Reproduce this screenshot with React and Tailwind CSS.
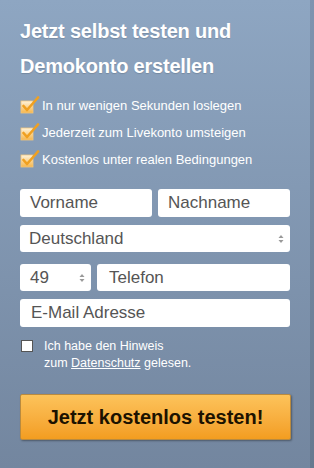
import React from "react";

function CheckIcon() {
  return (
    <svg width="20" height="18" viewBox="0 0 20 18" className="shrink-0">
      <defs>
        <linearGradient id="bx" x1="0" y1="0" x2="0" y2="1">
          <stop offset="0" stopColor="#fff4dc" />
          <stop offset="1" stopColor="#f5b54a" />
        </linearGradient>
      </defs>
      <rect x="1" y="5" width="12" height="12" fill="url(#bx)" stroke="#f2c57a" strokeWidth="0.8" />
      <path d="M3.5 10 L7 14 L18 1.5" fill="none" stroke="#f0a020" strokeWidth="2.6" strokeLinecap="round" strokeLinejoin="round" />
    </svg>
  );
}

function Arrows() {
  return (
    <svg width="6" height="10" viewBox="0 0 6 10">
      <path d="M0.5 4 L3 1 L5.5 4 Z" fill="#999" />
      <path d="M0.5 6 L3 9 L5.5 6 Z" fill="#999" />
    </svg>
  );
}

export default function App() {
  const font = { fontFamily: '"Liberation Sans", Arial, sans-serif' };
  return (
    <div
      className="w-[314px] h-[468px] flex bg-gradient-to-b from-[#8ea6c2] to-[#73869f]"
      style={font}
    >
      <div className="w-[310px] flex flex-col pl-[20px] pr-[20px]">
        <h1 className="text-white font-bold text-[20px] leading-[35px] mt-[14px] tracking-[-0.2px] [text-shadow:0_1px_1px_rgba(0,0,0,0.15)]">
          Jetzt selbst testen und
          <br />
          Demokonto erstellen
        </h1>
        <ul className="mt-[12px] flex flex-col gap-[9px]">
          {[
            "In nur wenigen Sekunden loslegen",
            "Jederzeit zum Livekonto umsteigen",
            "Kostenlos unter realen Bedingungen",
          ].map((t) => (
            <li key={t} className="flex items-end h-[18px] text-white text-[13px] leading-[16px]">
              <CheckIcon />
              <span className="ml-[2px]">{t}</span>
            </li>
          ))}
        </ul>
        <div className="mt-[21px] flex flex-col">
          <div className="flex gap-[6px]">
            <div className="flex-1 h-[28px] bg-white rounded-[3px] pl-[10px] flex items-center text-[17px] text-[#555]">
              Vorname
            </div>
            <div className="flex-1 h-[28px] bg-white rounded-[3px] pl-[10px] flex items-center text-[17px] text-[#555]">
              Nachname
            </div>
          </div>
          <div className="mt-[8px] h-[27px] bg-white rounded-[3px] pl-[9px] pr-[6px] flex items-center justify-between text-[17px] text-[#555]">
            <span>Deutschland</span>
            <Arrows />
          </div>
          <div className="mt-[12px] flex gap-[6px]">
            <div className="w-[71px] h-[27px] bg-white rounded-[3px] pl-[10px] pr-[6px] flex items-center justify-between text-[17px] text-[#555]">
              <span>49</span>
              <Arrows />
            </div>
            <div className="flex-1 h-[27px] bg-white rounded-[3px] pl-[12px] flex items-center text-[17px] text-[#555]">
              Telefon
            </div>
          </div>
          <div className="mt-[8px] h-[28px] bg-white rounded-[3px] pl-[11px] flex items-center text-[17px] text-[#555]">
            E-Mail Adresse
          </div>
        </div>
        <div className="mt-[13px] flex items-start">
          <div className="w-[12px] h-[12px] ml-[1px] bg-white border border-[#555] shrink-0" />
          <div className="ml-[11px] text-white text-[12.5px] leading-[17px] -mt-[2px]">
            Ich habe den Hinweis
            <br />
            zum <span className="underline">Datenschutz</span> gelesen.
          </div>
        </div>
        <button className="mt-[22px] h-[46px] w-[271px] rounded-[2px] border border-[#b98a3e] bg-gradient-to-b from-[#fcc35a] to-[#f39d1f] shadow-[1px_1px_2px_rgba(0,0,0,0.35)] text-[#1c1200] font-bold text-[20px] flex items-center justify-center">
          Jetzt kostenlos testen!
        </button>
      </div>
      <div className="w-[4px] bg-gradient-to-b from-[#7f94b0] to-[#66798f]" />
    </div>
  );
}
